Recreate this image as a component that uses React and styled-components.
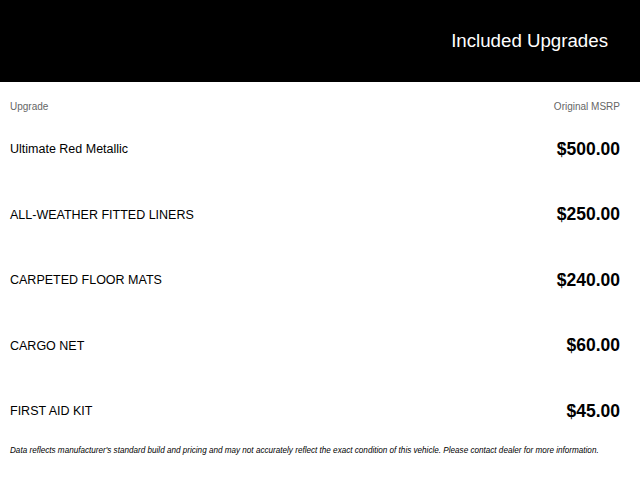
import React from 'react';
import styled, { createGlobalStyle } from 'styled-components';

const GlobalStyle = createGlobalStyle`
  html, body {
    margin: 0;
    padding: 0;
    background: #fff;
    font-family: "Liberation Sans", Arial, sans-serif;
  }
`;

const upgrades = [
  { name: 'Ultimate Red Metallic', price: '$500.00' },
  { name: 'ALL-WEATHER FITTED LINERS', price: '$250.00' },
  { name: 'CARPETED FLOOR MATS', price: '$240.00' },
  { name: 'CARGO NET', price: '$60.00' },
  { name: 'FIRST AID KIT', price: '$45.00' }
];

const Page = styled.div`
  width: 640px;
`;

const Banner = styled.header`
  height: 82px;
  background: #000;
  display: flex;
  align-items: center;
  justify-content: flex-end;
  padding-right: 32px;
  box-sizing: border-box;
`;

const Title = styled.h1`
  margin: 0;
  color: #fff;
  font-size: 18.7px;
  font-weight: 400;
`;

const Body = styled.section`
  padding: 0 20px 0 10px;
`;

const Row = styled.div`
  display: flex;
  align-items: center;
  justify-content: space-between;
  height: ${p => p.$height}px;
  margin-bottom: ${p => p.$gap || 0}px;
`;

const ColLabel = styled.span`
  font-size: 10px;
  color: #666;
`;

const Name = styled.span`
  font-size: 12.5px;
  color: #000;
`;

const Price = styled.span`
  font-size: 17.5px;
  font-weight: 700;
  color: #000;
`;

const Note = styled.p`
  margin: 17px 0 0;
  font-size: 8.15px;
  font-style: italic;
  color: #000;
  white-space: nowrap;
`;

export default function App() {
  return (
    <Page>
      <GlobalStyle />
      <Banner>
        <Title>Included Upgrades</Title>
      </Banner>
      <Body>
        <Row $height={49}>
          <ColLabel>Upgrade</ColLabel>
          <ColLabel>Original MSRP</ColLabel>
        </Row>
        {upgrades.map((u, i) => (
          <Row key={u.name} $height={36} $gap={i < upgrades.length - 1 ? 29.5 : 0}>
            <Name>{u.name}</Name>
            <Price>{u.price}</Price>
          </Row>
        ))}
        <Note>
          Data reflects manufacturer's standard build and pricing and may not accurately reflect the exact condition of this vehicle. Please contact dealer for more information.
        </Note>
      </Body>
    </Page>
  );
}
